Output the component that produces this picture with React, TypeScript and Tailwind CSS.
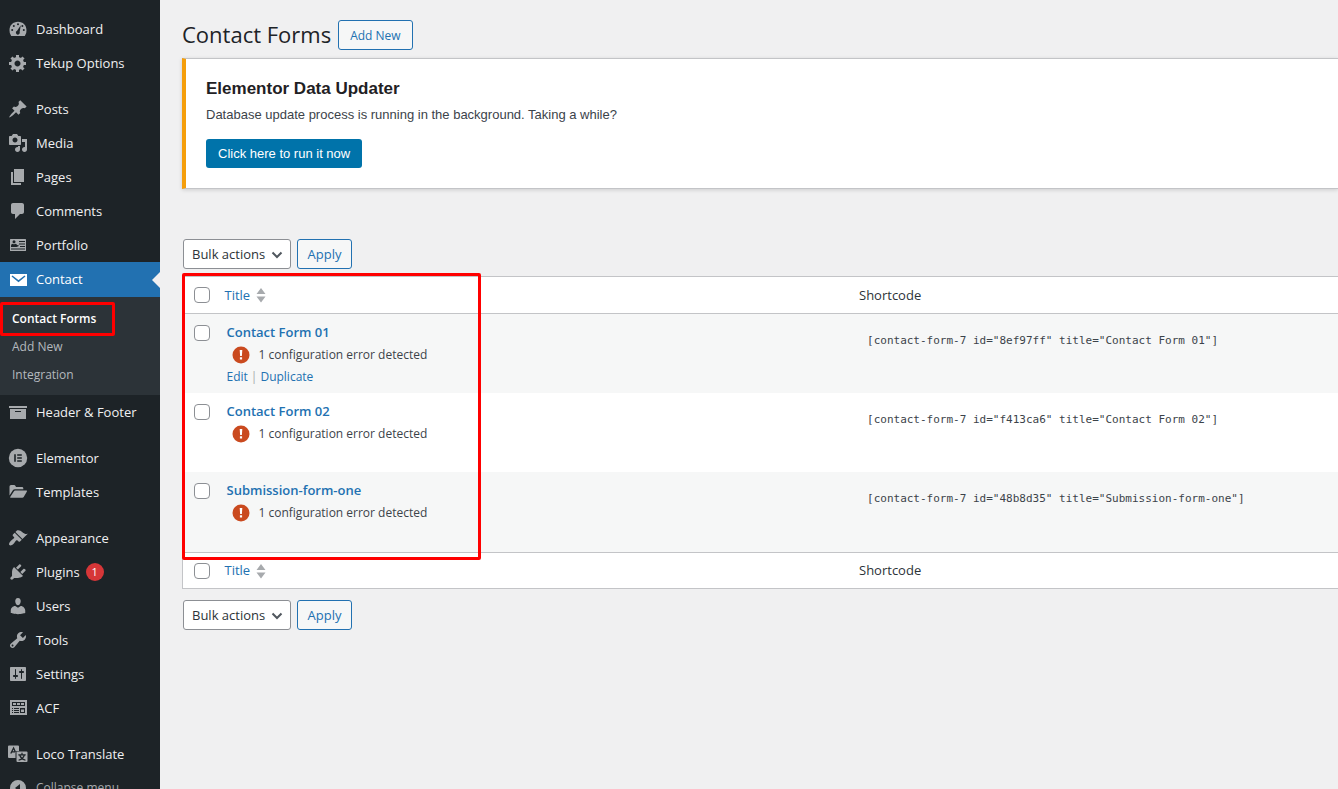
import type { ReactNode } from "react";

const ICONS: Record<string, ReactNode> = {
  dashboard: (
    <>
      <path d="M3.2 17h13.6A8.6 8.6 0 0 0 18.500 11.3C18.500 6.3 15 2.8 10 2.8S1.500 6.3 1.500 11.3A8.6 8.6 0 0 0 3.2 17z" />
      <g fill="#1d2327">
        <circle cx="10" cy="5.200" r="1" />
        <circle cx="5.8" cy="7" r="1" />
        <circle cx="14.4" cy="7" r="1" />
        <circle cx="4.200" cy="11" r="1" />
        <circle cx="15.800" cy="11" r="1" />
        <path d="M12.8 6.2l-1.1 6.6a2 2 0 1 1-2.6-1.1z" />
      </g>
    </>
  ),
  gear: (
    <path d="M18 12h-2.18c-.17.7-.44 1.35-.81 1.93l1.54 1.54-2.1 2.1-1.54-1.54c-.58.36-1.23.63-1.91.79V19H8v-2.18c-.68-.16-1.33-.43-1.91-.79l-1.54 1.54-2.12-2.12 1.54-1.54c-.36-.58-.63-1.23-.79-1.91H1V9.03h2.17c.16-.7.44-1.35.8-1.94L2.43 5.55l2.1-2.1 1.54 1.54c.58-.37 1.24-.64 1.93-.81V2h3v2.18c.68.16 1.33.43 1.91.79l1.54-1.54 2.12 2.12-1.54 1.54c.36.59.64 1.24.8 1.94H18V12zm-8.5 1.5c1.66 0 3-1.34 3-3s-1.34-3-3-3-3 1.34-3 3 1.34 3 3 3z" />
  ),
  pin: (
    <path d="M10.44 3.02l1.82-1.82 6.36 6.35-1.83 1.82c-1.05-.68-2.48-.57-3.41.36l-.75.75c-.92.93-1.04 2.35-.35 3.41l-1.83 1.82-2.41-2.41-2.8 2.79c-.42.42-3.38 2.71-3.8 2.29s1.86-3.39 2.28-3.81l2.79-2.79L4.1 9.36l1.83-1.82c1.05.69 2.48.57 3.4-.36l.75-.75c.93-.92 1.05-2.35.36-3.41z" />
  ),
  media: (
    <path d="M13 11V4c0-.55-.45-1-1-1h-1.67L9 1H5L3.67 3H2c-.55 0-1 .45-1 1v7c0 .55.45 1 1 1h10c.55 0 1-.45 1-1zM7 4.5c1.38 0 2.5 1.12 2.5 2.5S8.38 9.5 7 9.5 4.5 8.38 4.5 7 5.62 4.5 7 4.5zM14 6h5v10.5c0 1.38-1.12 2.5-2.5 2.5S14 17.88 14 16.5s1.12-2.5 2.5-2.5c.17 0 .34.02.5.05V9h-3V6zm-4 8.05V13h2v3.5c0 1.38-1.12 2.5-2.5 2.5S7 17.88 7 16.5 8.12 14 9.5 14c.17 0 .34.02.5.05z" />
  ),
  pages: <path d="M6 15V2h10v13H6zm-1 1h8v2H3V5h2v11z" />,
  comment: (
    <path d="M5 2h9c1.1 0 2 .9 2 2v7c0 1.1-.9 2-2 2h-2l-5 5v-5H5c-1.1 0-2-.9-2-2V4c0-1.1.9-2 2-2z" />
  ),
  idCard: (
    <>
      <path d="M2.500 4h15q.5 0 .5.5v11q0 .5-.5.5h-15q-.5 0-.5-.5v-11q0-.5.5-.5z" />
      <g fill="#1d2327">
        <circle cx="6" cy="6.800" r="1.500" />
        <path d="M3 12v-1.200q0-2 2-2l1 .8 1-.8q2 0 2.200 1.500l1.300-.5v1.500l-2 .7z" />
        <path d="M11 6h6v1h-6zM11 8.500h6v1h-6zM12 11h5v1h-5zM3 13.500h14v1H3z" />
      </g>
    </>
  ),
  mail: (
    <>
      <path d="M2 4h17v12H2z" />
      <path d="M4 6l6.5 5.2L17 6" fill="none" stroke="#2271b1" strokeWidth="1.5" />
    </>
  ),
  archive: <path d="M19 4v2H1V4h18zM2 7h16v10H2V7zm11 3V9H7v1h6z" />,
  elementor: (
    <>
      <circle cx="10" cy="10" r="9.2" />
      <path
        d="M6.2 6.2h1.600v7.600H6.2zM9.2 6.2h4.600v1.500H9.2zM9.2 9.250h4.600v1.500H9.2zM9.2 12.300h4.600v1.500H9.2z"
        fill="#1d2327"
      />
    </>
  ),
  folder: (
    <path d="M1.5 13.5V4.500q0-1.5 1.5-1.5h3q1 0 1.500 1L8 5h6q1.3 0 1.3 1.3v1H7q-1.5 0-2.3 1.2zM2.2 15L5.8 9.4q.5-.8 1.4-.8h11.3q.8 0 .4.8l-3.200 5.6q-.4.8-1.4.8H2.7q-.9 0-.5-.8z" />
  ),
  brush: (
    <path d="M14.48 11.06L7.41 3.99l1.5-1.5c.5-.56 2.3-.47 3.51.32 1.21.8 1.43 1.28 2.91 2.1 1.18.64 2.45 1.26 4.45.85zm-.71.71L6.7 4.7 4.93 6.47c-.39.39-.39 1.02 0 1.41l1.06 1.06c.39.39.39 1.03 0 1.42-.6.6-1.43 1.11-2.21 1.69-.35.26-.7.53-1.01.84C1.43 14.23.4 16.08 1.4 17.07c.99 1 2.84-.03 4.18-1.36.31-.31.58-.66.85-1.02.57-.78 1.08-1.61 1.69-2.21.39-.39 1.02-.39 1.41 0l1.06 1.06c.39.39 1.02.39 1.41 0z" />
  ),
  plug: (
    <path d="M13.11 4.36L9.87 7.6 8 5.73l3.24-3.24c.35-.34 1.05-.2 1.56.32.52.51.66 1.21.31 1.55zm-8 1.77l.91-1.12 9.01 9.01-1.19.84c-.71.71-2.63 1.16-3.82 1.16H6.14L4.9 17.26c-.59.59-1.54.59-2.12 0-.59-.58-.59-1.53 0-2.12l1.24-1.24v-3.88c0-1.13.4-3.19 1.09-3.89zm7.26 3.97l3.24-3.24c.34-.35 1.04-.21 1.55.31.52.51.66 1.21.31 1.55l-3.24 3.25z" />
  ),
  user: (
    <path d="M10 9.25c-2.27 0-2.73-3.44-2.73-3.44C7 4.02 7.82 2 9.97 2c2.16 0 2.98 2.02 2.71 3.81 0 0-.41 3.44-2.68 3.44zm0 2.57L12.72 10c2.39 0 4.52 2.33 4.52 4.53v2.49s-3.65 1.13-7.24 1.13c-3.65 0-7.24-1.13-7.24-1.13v-2.49c0-2.25 1.94-4.48 4.47-4.48z" />
  ),
  wrench: (
    <path d="M16.68 9.77c-1.34 1.34-3.3 1.67-4.95.99l-5.41 6.52c-.99.99-2.59.99-3.58 0s-.99-2.59 0-3.57l6.52-5.42c-.68-1.65-.35-3.61.99-4.95 1.28-1.28 3.12-1.62 4.72-1.06l-2.89 2.89 2.82 2.82 2.86-2.87c.53 1.58.18 3.39-1.08 4.65zM3.81 16.21c.4.39 1.04.39 1.43 0 .4-.4.4-1.04 0-1.43-.39-.4-1.03-.4-1.43 0-.39.39-.39 1.03 0 1.43z" />
  ),
  sliders: (
    <path d="M18 16V4c0-.55-.45-1-1-1H3c-.55 0-1 .45-1 1v12c0 .55.45 1 1 1h14c.55 0 1-.45 1-1zM8 11h1c.55 0 1 .45 1 1s-.45 1-1 1H8v1.5c0 .28-.22.5-.5.5s-.5-.22-.5-.5V13H6c-.55 0-1-.45-1-1s.45-1 1-1h1V5.5c0-.28.22-.5.5-.5s.5.22.5.5V11zm5-2h-1c-.55 0-1-.45-1-1s.45-1 1-1h1V5.5c0-.28.22-.5.5-.5s.5.22.5.5V7h1c.55 0 1 .45 1 1s-.45 1-1 1h-1v5.5c0 .28-.22.5-.5.5s-.5-.22-.5-.5V9z" />
  ),
  fields: (
    <>
      <path d="M2 2h17v15H2z" />
      <path
        d="M4 4h13v4H4zM4 10h1v1H4zM6 10h5v1H6zM4 12h1v1H4zM6 12h5v1H6zM4 14h1v1H4zM6 14h5v1H6zM12 10h5v5h-5z"
        fill="#1d2327"
      />
      <path d="M5 5h3v2H5zM9 5h3v2H9zM13 5h3v2h-3zM13 11.500h3v2.5h-3z" />
    </>
  ),
  translate: (
    <>
      <path d="M1 1.5h9q1 0 1 1V7H9q-1.5 0-1.5 1.5V14H1q-1 0-1-1V2.5q0-1 1-1z" />
      <path d="M2.8 9.5L5.6 4l1.8 4M3.6 7.8h3.6" fill="none" stroke="#1d2327" strokeWidth="1.3" />
      <path d="M9.5 7.5h9q1 0 1 1V17q0 1-1 1h-9q-1 0-1-1V8.5q0-1 1-1z" />
      <path
        d="M14 8.8v1.8M10.3 10.9h7.4M16.4 11q-1 3.6-5.8 5.3M11.7 11q1.2 3.8 5.8 5.3"
        fill="none"
        stroke="#1d2327"
        strokeWidth="1.2"
      />
    </>
  ),
  collapse: <path fillRule="evenodd" d="M10 2a8 8 0 1 1 0 16 8 8 0 0 1 0-16zm2 12V6l-5 4z" />,
};

type Item = { label: string; icon: string; gap?: boolean; badge?: string };

const TOP: Item[] = [
  { label: "Dashboard", icon: "dashboard" },
  { label: "Tekup Options", icon: "gear" },
  { label: "Posts", icon: "pin", gap: true },
  { label: "Media", icon: "media" },
  { label: "Pages", icon: "pages" },
  { label: "Comments", icon: "comment" },
  { label: "Portfolio", icon: "idCard" },
];

const BOTTOM: Item[] = [
  { label: "Header & Footer", icon: "archive" },
  { label: "Elementor", icon: "elementor", gap: true },
  { label: "Templates", icon: "folder" },
  { label: "Appearance", icon: "brush", gap: true },
  { label: "Plugins", icon: "plug", badge: "1" },
  { label: "Users", icon: "user" },
  { label: "Tools", icon: "wrench" },
  { label: "Settings", icon: "sliders" },
  { label: "ACF", icon: "fields" },
  { label: "Loco Translate", icon: "translate", gap: true },
];

const FORMS = [
  { title: "Contact Form 01", id: "8ef97ff", actions: true },
  { title: "Contact Form 02", id: "f413ca6", actions: false },
  { title: "Submission-form-one", id: "48b8d35", actions: false },
];

function Icon({ name }: { name: string }) {
  return (
    <svg viewBox="0 0 20 20" className="size-5 shrink-0 fill-current" aria-hidden="true">
      {ICONS[name]}
    </svg>
  );
}

function MenuItem({ item }: { item: Item }) {
  return (
    <li className={item.gap ? "mt-3" : ""}>
      <a href="#" className="flex h-[34px] items-center gap-2 pl-2 text-[#f0f0f1]">
        <span className="text-[#a7aaad]">
          <Icon name={item.icon} />
        </span>
        <span className="pt-px">{item.label}</span>
        {item.badge && (
          <span className="-ml-0.5 flex size-[18px] items-center justify-center rounded-full bg-[#d63638] text-[11px] text-white">
            {item.badge}
          </span>
        )}
      </a>
    </li>
  );
}

function BulkActions({ id }: { id: string }) {
  return (
    <div className="ml-px flex gap-1.5">
      <div className="relative">
        <select
          id={id}
          aria-label="Select bulk action"
          className="h-[30px] w-[108px] appearance-none rounded-[3px] border border-[#8c8f94] bg-white pt-px pl-2 text-[13px] text-[#2c3338]"
        >
          <option>Bulk actions</option>
        </select>
        <svg
          viewBox="0 0 12 8"
          className="pointer-events-none absolute top-3 right-2 h-2 w-3 fill-none stroke-[#50575e] stroke-2"
          aria-hidden="true"
        >
          <path d="M1.500 1.500L6 6l4.500-4.500" />
        </svg>
      </div>
      <button className="h-[30px] w-[55px] rounded-[3px] border border-[#2271b1] bg-[#f6f7f7] pt-px text-[13px] text-[#2271b1]">
        Apply
      </button>
    </div>
  );
}

function Check({ label }: { label: string }) {
  return (
    <input
      type="checkbox"
      aria-label={label}
      className="block size-4 appearance-none rounded-[4px] border border-[#8c8f94] bg-white"
    />
  );
}

function HeadCells() {
  return (
    <>
      <td className="pl-[11px] align-middle">
        <Check label="Select all" />
      </td>
      <th scope="col" className="pl-[9px] text-left font-normal">
        <a href="#" className="flex items-center gap-1.5 text-[#2271b1]">
          <span className="pt-px">Title</span>
          <svg viewBox="0 0 10 16" className="h-4 w-2.5 fill-[#a7aaad]" aria-hidden="true">
            <path d="M5 1l4.500 6h-9zM5 15.500l4.500-6h-9z" />
          </svg>
        </a>
      </th>
      <th scope="col" className="pt-px pl-2 text-left font-normal text-[#2c3338]">
        Shortcode
      </th>
    </>
  );
}

export default function App() {
  return (
    <div className="flex h-screen overflow-hidden bg-[#f0f0f1] font-['Open_Sans','Noto_Sans',sans-serif] text-[13px] text-[#3c434a]">
      <nav aria-label="Main menu" className="w-40 shrink-0 bg-[#1d2327] pt-3">
        <ul>
          {TOP.map((item) => (
            <MenuItem key={item.label} item={item} />
          ))}
          <li>
            <a href="#" className="relative flex h-[35px] items-center gap-2 bg-[#2271b1] pl-2 text-white">
              <Icon name="mail" />
              <span>Contact</span>
              <svg viewBox="0 0 8 16" className="absolute right-0 h-4 w-2 fill-[#f0f0f1]" aria-hidden="true">
                <path d="M8 0v16L0 8z" />
              </svg>
            </a>
            <ul className="bg-[#2c3338] pt-2 pb-1.5 text-xs leading-7 text-[#b4b9be]">
              <li className="relative">
                <a href="#" className="block pl-3 font-semibold text-white">
                  Contact Forms
                </a>
                <span className="pointer-events-none absolute -top-[3px] left-0 h-[34px] w-[115px] rounded-xs border-3 border-[#ff0000]" />
              </li>
              <li>
                <a href="#" className="block pl-3">
                  Add New
                </a>
              </li>
              <li>
                <a href="#" className="block pl-3">
                  Integration
                </a>
              </li>
            </ul>
          </li>
          {BOTTOM.map((item) => (
            <MenuItem key={item.label} item={item} />
          ))}
          <li>
            <button className="flex h-[34px] items-center gap-2 pl-2 text-xs text-[#a7aaad]">
              <Icon name="collapse" />
              <span>Collapse menu</span>
            </button>
          </li>
        </ul>
      </nav>

      <main className="min-w-0 grow pl-[22px]">
        <div className="flex items-start gap-[7px] pt-5">
          <h1 className="text-[22px] leading-7 text-[#1d2327]">Contact Forms</h1>
          <a
            href="#"
            className="flex h-[30px] items-center rounded-[3px] border border-[#2271b1] bg-[#f6f7f7] px-[11px] pt-px text-xs text-[#2271b1]"
          >
            Add New
          </a>
        </div>

        <section className="mt-2 border-y border-l-4 border-y-[#c3c4c7] border-l-[#f59e0b] bg-white p-5 font-['Liberation_Sans',Arial,sans-serif] shadow-[0_1px_4px_rgba(0,0,0,0.15)]">
          <h2 className="text-[17px] leading-5 font-bold text-[#1f2124]">Elementor Data Updater</h2>
          <p className="mt-[7px] leading-[18px]">
            Database update process is running in the background. Taking a while?
          </p>
          <button className="mt-[15px] block h-[29px] rounded-[3px] bg-[#0073aa] px-3 text-white">
            Click here to run it now
          </button>
        </section>

        <div className="mt-[50px]">
          <BulkActions id="bulk-top" />
        </div>

        <div className="relative mt-[7px] mb-[11px]">
          <table className="w-full table-fixed border-collapse border-y border-l border-[#c3c4c7] bg-white">
            <colgroup>
              <col className="w-[33px]" />
              <col className="w-[55%]" />
              <col />
            </colgroup>
            <thead className="border-b border-[#c3c4c7]">
              <tr className="h-[37px]">
                <HeadCells />
              </tr>
            </thead>
            <tbody>
              {FORMS.map((form) => (
                <tr key={form.id} className="h-[79px] align-top last:h-[81px] odd:bg-[#f6f7f7]">
                  <td className="pt-[11px] pl-[11px]">
                    <Check label={`Select ${form.title}`} />
                  </td>
                  <td className="pt-[7px] pl-[11px] text-xs leading-[22px]">
                    <a href="#" className="block text-[13px] font-semibold text-[#2271b1]">
                      {form.title}
                    </a>
                    <div className="mt-px flex items-center gap-[9px] pl-[5px]">
                      <svg viewBox="0 0 18 18" className="size-[18px]" aria-hidden="true">
                        <circle cx="9" cy="9" r="8.500" fill="#ca4a1f" />
                        <path d="M7.700 4h2.600l-.4 6H8.100zM7.900 11.300h2.200v2.200H7.900z" fill="#fff" />
                      </svg>
                      <span>1 configuration error detected</span>
                    </div>
                    {form.actions && (
                      <div className="flex gap-[3px] text-[#a7aaad]">
                        <a href="#" className="text-[#2271b1]">
                          Edit
                        </a>
                        |
                        <a href="#" className="text-[#2271b1]">
                          Duplicate
                        </a>
                      </div>
                    )}
                  </td>
                  <td className="pt-4 pl-4 font-['DejaVu_Sans_Mono',monospace] text-[11px] leading-[22px]">
                    {`[contact-form-7 id="${form.id}" title="${form.title}"]`}
                  </td>
                </tr>
              ))}
            </tbody>
            <tfoot className="border-t border-[#c3c4c7]">
              <tr className="h-9">
                <HeadCells />
              </tr>
            </tfoot>
          </table>
          <div className="pointer-events-none absolute -top-[3px] bottom-[29px] left-0 w-[299px] rounded-xs border-3 border-[#ff0000]" />
        </div>

        <BulkActions id="bulk-bottom" />
      </main>
    </div>
  );
}
